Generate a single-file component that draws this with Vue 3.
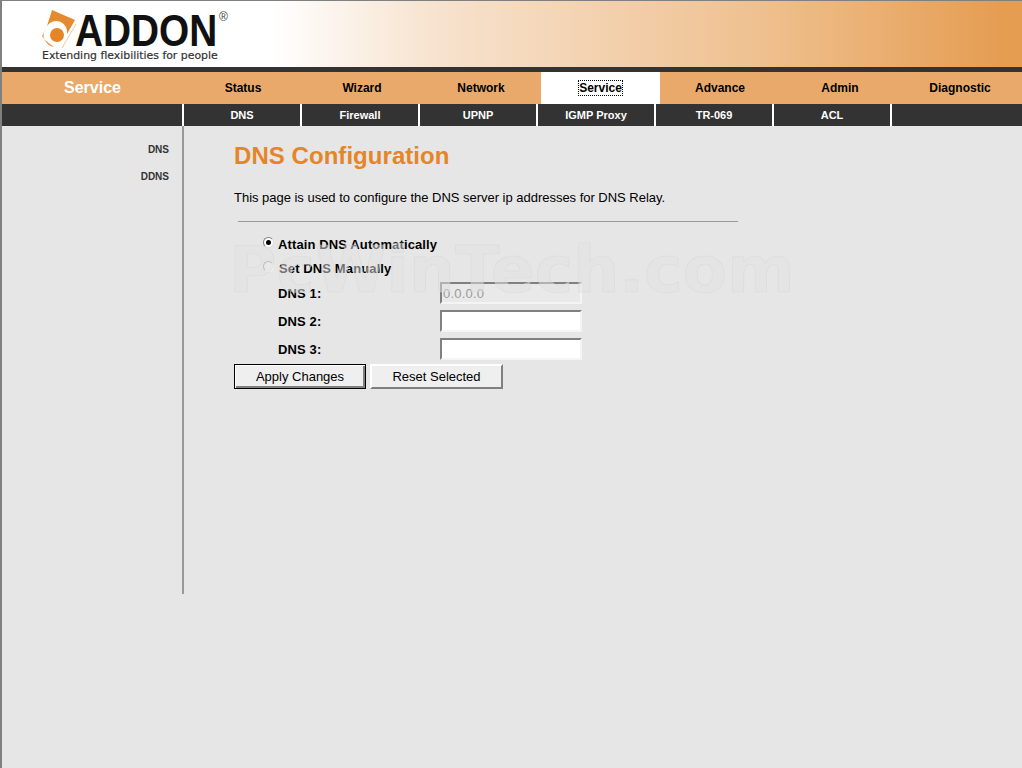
<script setup>
const navItems = [
  { label: 'Status', width: 120 },
  { label: 'Wizard', width: 118 },
  { label: 'Network', width: 120 },
  { label: 'Service', width: 119, active: true },
  { label: 'Advance', width: 120 },
  { label: 'Admin', width: 120 },
  { label: 'Diagnostic', width: 120 }
]
const subItems = ['DNS', 'Firewall', 'UPNP', 'IGMP Proxy', 'TR-069', 'ACL']
const sideItems = ['DNS', 'DDNS']
</script>

<template>
  <div class="frame">
    <div class="page">
      <header class="banner">
        <div class="logo">
          <svg class="mark" width="40" height="42" viewBox="40 8 40 42">
            <path d="M52 10 L75 20 L67 34 A11 11 0 0 0 47 26 Z" fill="#e58a2e" />
            <path d="M46 28 L42 36 L45 40 L54 47 A12 12 0 0 1 46 28 Z" fill="#eb9c4e" />
            <circle cx="57" cy="35" r="7" fill="#e58526" />
            <path d="M76 24 L62 48" stroke="#f3c79c" stroke-width="1" fill="none" />
          </svg>
          <span class="brand">ADDON</span>
          <span class="reg">®</span>
          <span class="tag">Extending flexibilities for people</span>
        </div>
      </header>
      <div class="rule"></div>
      <nav class="nav">
        <div class="nav-title">Service</div>
        <a
          v-for="item in navItems"
          :key="item.label"
          class="nav-item"
          :class="{ active: item.active }"
          :style="{ width: item.width + 'px' }"
        ><span>{{ item.label }}</span></a>
      </nav>
      <div class="sub">
        <div class="sub-spacer"></div>
        <a v-for="item in subItems" :key="item" class="sub-item">{{ item }}</a>
      </div>
      <div class="body">
        <aside class="side">
          <a v-for="item in sideItems" :key="item" class="side-item">{{ item }}</a>
        </aside>
        <main class="content">
          <h1>DNS Configuration</h1>
          <p class="intro">This page is used to configure the DNS server ip addresses for DNS Relay.</p>
          <hr />
          <form class="form" @submit.prevent>
            <label class="radio"><i class="dot on"></i>Attain DNS Automatically</label>
            <label class="radio second"><i class="dot off"></i>Set DNS Manually</label>
            <div class="field first"><label>DNS 1:</label><input class="inp" disabled value="0.0.0.0" /></div>
            <div class="field"><label>DNS 2:</label><input class="inp" /></div>
            <div class="field"><label>DNS 3:</label><input class="inp" /></div>
            <div class="buttons">
              <button class="btn primary" type="button">Apply Changes</button>
              <button class="btn" type="button">Reset Selected</button>
            </div>
          </form>
        </main>
      </div>
    </div>
    <div class="watermark">PcWinTech.com</div>
  </div>
</template>

<style>
html, body { margin: 0; background: #e6e6e6; overflow: hidden; }
</style>

<style scoped>
.frame {
  position: relative;
  width: 1020px;
  height: 767px;
  border-left: 2px solid #808080;
  border-top: 1px solid #808080;
  background: #e6e6e6;
  font-family: "Liberation Sans", Arial, sans-serif;
  color: #000;
  overflow: hidden;
}
.banner {
  height: 66px;
  background: linear-gradient(90deg, #fff 0, #fff 270px, #f7e3cf 430px, #efc08f 760px, #e59d52 1000px);
}
.logo { position: relative; width: 240px; height: 66px; }
.mark { position: absolute; left: 38px; top: 7px; }
.brand {
  position: absolute;
  left: 73px;
  top: 4px;
  font-size: 45px;
  line-height: 52px;
  font-weight: 700;
  transform: scaleX(0.862);
  transform-origin: 0 0;
  color: #111;
}
.reg { position: absolute; left: 217px; top: 9px; font-size: 12px; color: #444; }
.tag {
  position: absolute;
  left: 40px;
  top: 48px;
  font-family: "DejaVu Sans", sans-serif;
  font-size: 10.9px;
  line-height: 14px;
  font-weight: 400;
  white-space: nowrap;
  color: #333;
  -webkit-text-stroke: 0.2px #333;
}
.rule { height: 5px; background: #333; }
.nav { display: flex; height: 32px; background: #e9a96a; }
.nav-title {
  width: 181px;
  color: #fff;
  font-size: 16px;
  font-weight: 700;
  text-align: center;
  line-height: 31px;
}
.nav-item {
  display: flex;
  align-items: center;
  justify-content: center;
  font-size: 12px;
  font-weight: 700;
  padding-bottom: 1px;
  box-sizing: border-box;
}
.nav-item.active { background: #fff; }
.nav-item.active span { outline: 1px dotted #000; }
.sub { display: flex; height: 22px; background: #333; }
.sub-spacer { width: 180px; }
.sub-item {
  width: 116px;
  border-left: 2px solid #fff;
  color: #fff;
  font-size: 11px;
  font-weight: 700;
  text-align: center;
  line-height: 22px;
}
.sub-item:last-child { border-right: 2px solid #fff; }
.body { display: flex; align-items: flex-start; }
.side {
  width: 180px;
  height: 458px;
  border-right: 2px solid #999;
  padding-top: 10px;
  display: flex;
  flex-direction: column;
  align-items: flex-end;
}
.side-item {
  color: #333;
  font-size: 10px;
  font-weight: 700;
  line-height: 27px;
  height: 27px;
  padding-right: 13px;
}
.content { padding-left: 50px; width: 780px; }
h1 {
  margin: 16px 0 0;
  font-size: 24px;
  line-height: 28px;
  font-weight: 700;
  letter-spacing: 0.05px;
  color: #e58527;
}
.intro { margin: 19px 0 0; font-size: 13px; line-height: 18px; letter-spacing: -0.02px; }
hr {
  width: 500px;
  height: 1px;
  border: 0;
  background: #999;
  margin: 14px 0 0 4px;
}
.form { padding-top: 13px; }
.radio {
  display: flex;
  align-items: center;
  height: 18px;
  padding-left: 29px;
  font-size: 13px;
  letter-spacing: 0.12px;
  font-weight: 700;
}
.radio.second { margin-top: 6px; }
.dot {
  width: 11px;
  height: 11px;
  margin-right: 4px;
  margin-top: -3px;
  border-radius: 50%;
  background: #fff;
  box-sizing: border-box;
  border: 1px solid #808080;
  border-right-color: #ddd;
  border-bottom-color: #ddd;
  position: relative;
}
.dot.on::after {
  content: "";
  position: absolute;
  left: 2px;
  top: 2px;
  width: 5px;
  height: 5px;
  border-radius: 50%;
  background: #000;
}
.dot.off { background: #eee; border-color: #999 #f2f2f2 #f2f2f2 #999; margin-right: 5px; }
.field {
  display: flex;
  align-items: center;
  height: 28px;
  padding-left: 44px;
  font-size: 13px;
  letter-spacing: 0.12px;
  font-weight: 700;
}
.field.first { margin-top: 2px; }
.field label { width: 162px; }
.inp {
  width: 142px;
  height: 22px;
  box-sizing: border-box;
  border: 2px solid;
  border-color: #808080 #f4f4f4 #f4f4f4 #808080;
  background: #fff;
  padding: 0 1px;
  font-family: "Liberation Sans", Arial, sans-serif;
  font-size: 13px;
  letter-spacing: 0.2px;
  color: #000;
  outline: 0;
}
.inp:disabled { background: #e9e9e9; color: #9a9a9a; }
.buttons { display: flex; gap: 4px; margin-top: 1px; }
.btn {
  height: 25px;
  width: 133px;
  box-sizing: border-box;
  font-family: "Liberation Sans", Arial, sans-serif;
  font-size: 13px;
  color: #000;
  background: #efefef;
  border: 2px solid;
  border-color: #fff #808080 #808080 #fff;
  padding: 0;
}
.btn.primary {
  width: 132px;
  border: 1px solid #000;
  box-shadow: inset 1px 1px 0 #fff, inset -2px -2px 0 #808080;
}
.watermark {
  position: absolute;
  left: 227px;
  top: 231px;
  font-family: "DejaVu Sans", sans-serif;
  font-size: 64.9px;
  line-height: 76px;
  font-weight: 700;
  color: rgba(226, 226, 226, 0.5);
  -webkit-text-stroke: 0.6px rgba(214, 214, 214, 0.55);
  white-space: nowrap;
  pointer-events: none;
}
</style>
